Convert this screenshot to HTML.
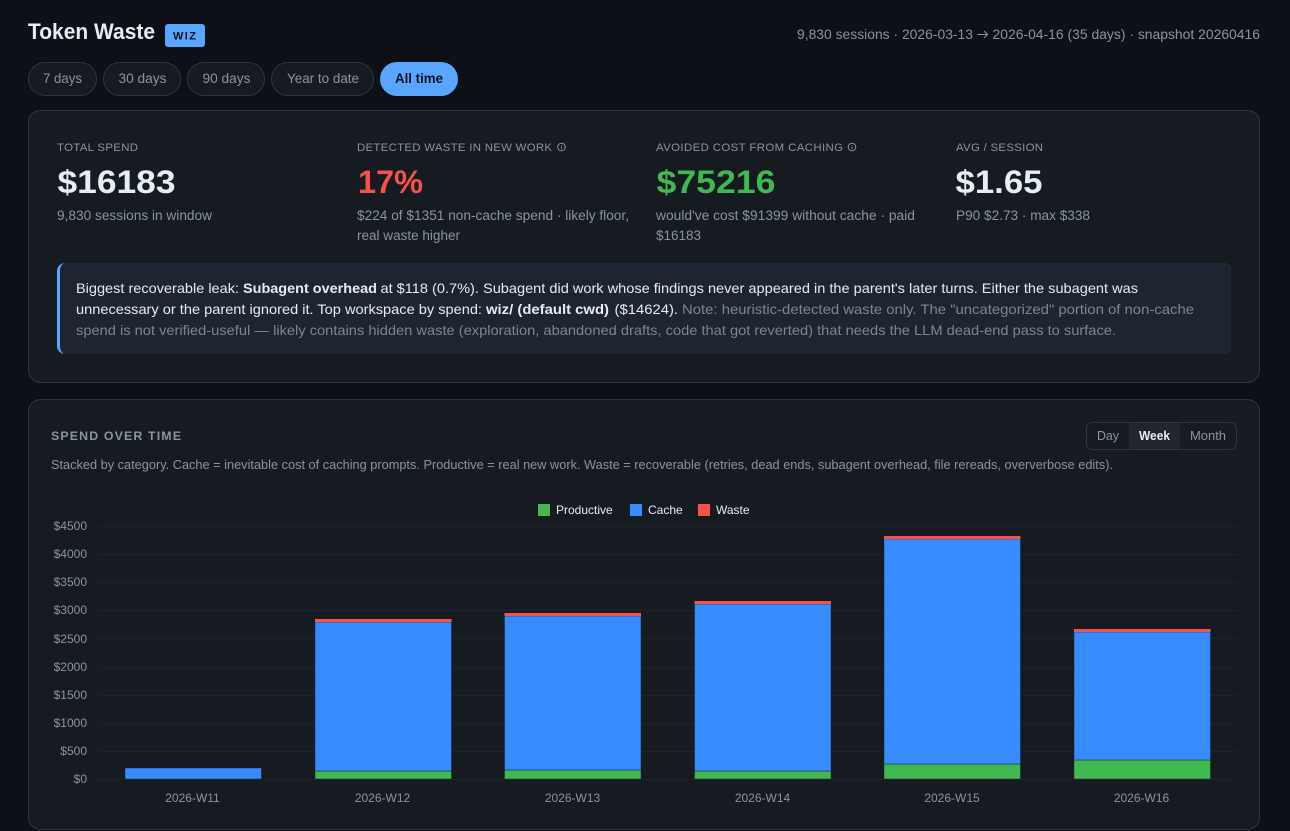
<!DOCTYPE html>
<html><head><meta charset="utf-8"><title>Token Waste</title>
<style>
html,body{margin:0;padding:0;background:#0d1117;width:1290px;height:831px;overflow:hidden}
svg{display:block;font-family:"Liberation Sans",Arial,sans-serif}
.m{fill:#8b949e;font-size:13.5px}
.l{fill:#8b949e;font-size:11.4px}
.v{font-size:32px;font-weight:700}
.c{font-size:13.8px;fill:#e6edf3}
.b{font-weight:700}
.g{fill:#7d8590}
.a{font-size:12px;fill:#8b949e}
.d{font-size:12.5px;fill:#8b949e}
.f{font-size:12px;fill:#e6edf3}
</style></head><body>
<svg width="1290" height="831" viewBox="0 0 1290 831" xmlns="http://www.w3.org/2000/svg">
<rect width="1290" height="831" fill="#0d1117"/>

<text x="28" y="39" font-size="22.5" font-weight="700" fill="#e6edf3" textLength="127" lengthAdjust="spacingAndGlyphs">Token Waste</text>
<rect x="165" y="24" width="40" height="23" rx="3" fill="#58a6ff"/>
<text x="173" y="39.5" font-size="11" font-weight="700" fill="#0d1117" textLength="23" lengthAdjust="spacing">WIZ</text>
<text class="m" x="797" y="39" textLength="176" lengthAdjust="spacingAndGlyphs">9,830 sessions · 2026-03-13</text>
<path d="M977.5 34.5H987.5M984 31l3.5 3.5-3.5 3.5" fill="none" stroke="#8b949e" stroke-width="1.1"/>
<text class="m" x="992.5" y="39" textLength="267.5" lengthAdjust="spacingAndGlyphs">2026-04-16 (35 days) · snapshot 20260416</text>

<g fill="#161b22" stroke="#30363d">
<rect x="28.5" y="62.5" width="68" height="33" rx="16.5"/>
<rect x="103.5" y="62.5" width="77" height="33" rx="16.5"/>
<rect x="187.5" y="62.5" width="77" height="33" rx="16.5"/>
<rect x="271.5" y="62.5" width="102" height="33" rx="16.5"/>
</g>
<rect x="380" y="62" width="78" height="34" rx="17" fill="#58a6ff"/>
<text class="m" x="43" y="83" textLength="39" lengthAdjust="spacingAndGlyphs">7 days</text>
<text class="m" x="118.5" y="83" textLength="48" lengthAdjust="spacingAndGlyphs">30 days</text>
<text class="m" x="202.5" y="83" textLength="48" lengthAdjust="spacingAndGlyphs">90 days</text>
<text class="m" x="287" y="83" textLength="72" lengthAdjust="spacingAndGlyphs">Year to date</text>
<text x="395" y="83" font-size="13.5" font-weight="700" fill="#0d1117" textLength="48" lengthAdjust="spacingAndGlyphs">All time</text>

<rect x="28.5" y="110.5" width="1231" height="272" rx="12" fill="#161b22" stroke="#30363d"/>
<text class="l" x="57" y="151" textLength="81" lengthAdjust="spacing">TOTAL SPEND</text>
<text class="l" x="357" y="151" textLength="195" lengthAdjust="spacing">DETECTED WASTE IN NEW WORK</text>
<circle cx="561.5" cy="147" r="3.8" fill="none" stroke="#8b949e"/><path d="M561.5 145v.8M561.5 146.8v2.2" stroke="#8b949e" fill="none"/>
<text class="l" x="656" y="151" textLength="187" lengthAdjust="spacing">AVOIDED COST FROM CACHING</text>
<circle cx="852" cy="147" r="3.8" fill="none" stroke="#8b949e"/><path d="M852 145v.8M852 146.8v2.2" stroke="#8b949e" fill="none"/>
<text class="l" x="956" y="151" textLength="87" lengthAdjust="spacing">AVG / SESSION</text>

<text class="v" x="57.5" y="193" fill="#e6edf3" textLength="118" lengthAdjust="spacingAndGlyphs">$16183</text>
<text class="v" x="358" y="193" fill="#f85149" textLength="65" lengthAdjust="spacingAndGlyphs">17%</text>
<text class="v" x="656.5" y="193" fill="#3fb950" textLength="119" lengthAdjust="spacingAndGlyphs">$75216</text>
<text class="v" x="955.5" y="193" fill="#e6edf3" textLength="87" lengthAdjust="spacingAndGlyphs">$1.65</text>

<text class="m" x="57" y="220" textLength="155" lengthAdjust="spacingAndGlyphs">9,830 sessions in window</text>
<text class="m" x="357" y="220" textLength="272" lengthAdjust="spacingAndGlyphs">$224 of $1351 non-cache spend · likely floor,</text>
<text class="m" x="357" y="240" textLength="103" lengthAdjust="spacingAndGlyphs">real waste higher</text>
<text class="m" x="656" y="220" textLength="259" lengthAdjust="spacingAndGlyphs">would've cost $91399 without cache · paid</text>
<text class="m" x="656" y="240" textLength="45" lengthAdjust="spacingAndGlyphs">$16183</text>
<text class="m" x="956" y="220" textLength="134" lengthAdjust="spacingAndGlyphs">P90 $2.73 · max $338</text>

<rect x="57" y="263" width="1174" height="91" rx="8" fill="#58a6ff"/>
<path d="M65 263H1223a8 8 0 0 1 8 8V346a8 8 0 0 1 -8 8H65a5 8 0 0 1 -5 -8V271a5 8 0 0 1 5 -8Z" fill="#1f2530"/>
<text class="c" x="76" y="293" textLength="163" lengthAdjust="spacingAndGlyphs">Biggest recoverable leak:</text>
<text class="c b" x="243" y="293" textLength="134" lengthAdjust="spacingAndGlyphs">Subagent overhead</text>
<text class="c" x="380.5" y="293" textLength="757.5" lengthAdjust="spacingAndGlyphs">at $118 (0.7%). Subagent did work whose findings never appeared in the parent's later turns. Either the subagent was</text>
<text class="c" x="76" y="314" textLength="406" lengthAdjust="spacingAndGlyphs">unnecessary or the parent ignored it. Top workspace by spend:</text>
<text class="c b" x="486" y="314" textLength="123" lengthAdjust="spacingAndGlyphs">wiz/ (default cwd)</text>
<text class="c" x="614.5" y="314" textLength="63.5" lengthAdjust="spacingAndGlyphs">($14624).</text>
<text class="c g" x="682" y="314" textLength="512" lengthAdjust="spacingAndGlyphs">Note: heuristic-detected waste only. The "uncategorized" portion of non-cache</text>
<text class="c g" x="76" y="335" textLength="1040" lengthAdjust="spacingAndGlyphs">spend is not verified-useful — likely contains hidden waste (exploration, abandoned drafts, code that got reverted) that needs the LLM dead-end pass to surface.</text>

<rect x="28.5" y="399.5" width="1231" height="430" rx="12" fill="#161b22" stroke="#30363d"/>
<text x="51" y="440" font-size="12.4" font-weight="700" fill="#8b949e" textLength="130" lengthAdjust="spacing">SPEND OVER TIME</text>
<rect x="1086.5" y="422.5" width="150" height="27" rx="6" fill="#161b22" stroke="#30363d"/>
<rect x="1129" y="423" width="51" height="26" fill="#21262d"/>
<text class="d" x="1097" y="440" textLength="22" lengthAdjust="spacingAndGlyphs">Day</text>
<text x="1139" y="440" font-size="12.5" font-weight="700" fill="#e6edf3" textLength="31" lengthAdjust="spacingAndGlyphs">Week</text>
<text class="d" x="1190" y="440" textLength="36" lengthAdjust="spacingAndGlyphs">Month</text>
<text class="d" x="51" y="469" textLength="1062" lengthAdjust="spacingAndGlyphs">Stacked by category. Cache = inevitable cost of caching prompts. Productive = real new work. Waste = recoverable (retries, dead ends, subagent overhead, file rereads, oververbose edits).</text>

<rect x="538" y="504" width="12" height="12" fill="#3fb950"/>
<text class="f" x="556" y="514">Productive</text>
<rect x="630" y="504" width="12" height="12" fill="#388bfd"/>
<text class="f" x="648" y="514">Cache</text>
<rect x="698" y="504" width="12" height="12" fill="#f85149"/>
<text class="f" x="716" y="514">Waste</text>

<g stroke="#1f242b" stroke-width="1" fill="none">
<path d="M98 526.5H1237M98 554.5H1237M98 582.5H1237M98 610.5H1237M98 638.5H1237M98 667.5H1237M98 695.5H1237M98 723.5H1237M98 751.5H1237M98 779.5H1237"/>
<path d="M98.5 526V779" stroke="#1c2128"/>
</g>
<g class="a" text-anchor="end">
<text x="87" y="530">$4500</text>
<text x="87" y="558">$4000</text>
<text x="87" y="586">$3500</text>
<text x="87" y="614">$3000</text>
<text x="87" y="643">$2500</text>
<text x="87" y="671">$2000</text>
<text x="87" y="699">$1500</text>
<text x="87" y="727">$1000</text>
<text x="87" y="755">$500</text>
<text x="87" y="783">$0</text>
</g>

<g stroke="#161b22" stroke-opacity=".45" stroke-width="1">
<rect x="125" y="768" width="136.5" height="11" fill="#388bfd"/>

<rect x="315" y="771" width="136.5" height="8" fill="#3fb950"/>
<rect x="315" y="622" width="136.5" height="149" fill="#388bfd"/>
<rect x="315" y="619" width="136.5" height="3" fill="#f85149" stroke="none"/>

<rect x="504.5" y="770" width="136.5" height="9" fill="#3fb950"/>
<rect x="504.5" y="616" width="136.5" height="154" fill="#388bfd"/>
<rect x="504.5" y="613" width="136.5" height="3" fill="#f85149" stroke="none"/>

<rect x="694.5" y="771" width="136.5" height="8" fill="#3fb950"/>
<rect x="694.5" y="604" width="136.5" height="167" fill="#388bfd"/>
<rect x="694.5" y="601" width="136.5" height="3" fill="#f85149" stroke="none"/>

<rect x="884" y="764" width="136.5" height="15" fill="#3fb950"/>
<rect x="884" y="539" width="136.5" height="225" fill="#388bfd"/>
<rect x="884" y="536" width="136.5" height="3" fill="#f85149" stroke="none"/>

<rect x="1074" y="760" width="136.5" height="19" fill="#3fb950"/>
<rect x="1074" y="632" width="136.5" height="128" fill="#388bfd"/>
<rect x="1074" y="629" width="136.5" height="3" fill="#f85149" stroke="none"/>
</g>

<g class="a" text-anchor="middle">
<text x="192.5" y="802">2026-W11</text>
<text x="382.5" y="802">2026-W12</text>
<text x="572.5" y="802">2026-W13</text>
<text x="762.5" y="802">2026-W14</text>
<text x="952" y="802">2026-W15</text>
<text x="1141.5" y="802">2026-W16</text>
</g>
</svg>
</body></html>
